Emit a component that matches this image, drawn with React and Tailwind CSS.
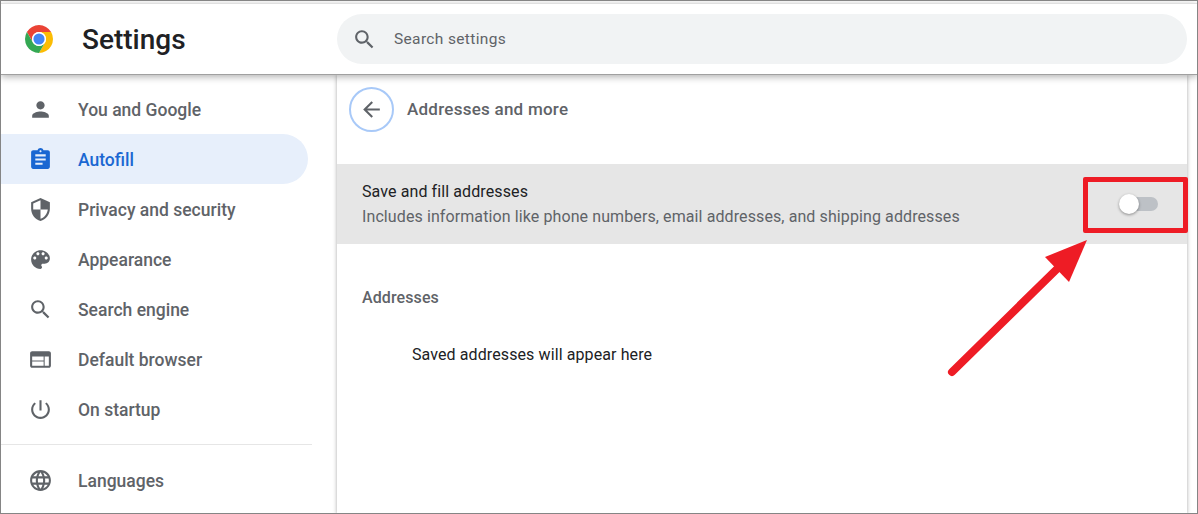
const ICONS = {
  person: 'M12 12c2.21 0 4-1.79 4-4s-1.79-4-4-4-4 1.79-4 4 1.79 4 4 4zm0 2c-2.67 0-8 1.34-8 4v2h16v-2c0-2.66-5.33-4-8-4z',
  assignment: 'M19 3h-4.18C14.4 1.84 13.3 1 12 1c-1.3 0-2.4.84-2.82 2H5c-1.1 0-2 .9-2 2v14c0 1.1.9 2 2 2h14c1.1 0 2-.9 2-2V5c0-1.1-.9-2-2-2zm-7 0c.55 0 1 .45 1 1s-.45 1-1 1-1-.45-1-1 .45-1 1-1zm2 14H7v-2h7v2zm3-4H7v-2h10v2zm0-4H7V7h10v2z',
  security: 'M12 1L3 5v6c0 5.55 3.84 10.74 9 12 5.16-1.26 9-6.45 9-12V5l-9-4zm0 10.99h7c-.53 4.12-3.28 7.79-7 8.94V12H5V6.3l7-3.11v8.8z',
  palette: 'M12 3c-4.97 0-9 4.03-9 9s4.03 9 9 9c.83 0 1.5-.67 1.5-1.5 0-.39-.15-.74-.39-1.01-.23-.26-.38-.61-.38-.99 0-.83.67-1.5 1.5-1.5H16c2.76 0 5-2.24 5-5 0-4.42-4.03-8-9-8zm-5.5 9c-.83 0-1.5-.67-1.5-1.5S5.67 9 6.5 9 8 9.67 8 10.5 7.33 12 6.5 12zm3-4C8.67 8 8 7.33 8 6.5S8.67 5 9.5 5s1.5.67 1.5 1.5S10.33 8 9.5 8zm5 0c-.83 0-1.5-.67-1.5-1.5S13.67 5 14.5 5s1.5.67 1.5 1.5S15.33 8 14.5 8zm3 4c-.83 0-1.5-.67-1.5-1.5S16.67 9 17.5 9s1.5.67 1.5 1.5-.67 1.5-1.5 1.5z',
  search: 'M15.5 14h-.79l-.28-.27C15.41 12.59 16 11.11 16 9.5 16 5.91 13.09 3 9.5 3S3 5.91 3 9.5 5.91 16 9.5 16c1.61 0 3.09-.59 4.23-1.57l.27.28v.79l5 4.99L20.49 19l-4.99-5zm-6 0C7.01 14 5 11.99 5 9.5S7.01 5 9.5 5 14 7.01 14 9.5 11.99 14 9.5 14z',
  web: 'M20 4H4c-1.1 0-1.99.9-1.99 2L2 18c0 1.1.9 2 2 2h16c1.1 0 2-.9 2-2V6c0-1.1-.9-2-2-2zm-5 14H4v-4h11v4zm0-5H4V9h11v4zm5 5h-4V9h4v9z',
  power: 'M13 3h-2v10h2V3zm4.83 2.17l-1.42 1.42C17.99 7.86 19 9.81 19 12c0 3.87-3.13 7-7 7s-7-3.13-7-7c0-2.19 1.01-4.14 2.58-5.42L6.17 5.17C4.23 6.82 3 9.26 3 12c0 4.97 4.03 9 9 9s9-4.03 9-9c0-2.74-1.23-5.18-3.17-6.83z',
  language: 'M11.99 2C6.47 2 2 6.48 2 12s4.47 10 9.99 10C17.52 22 22 17.52 22 12S17.52 2 11.99 2zm6.93 6h-2.95c-.32-1.25-.78-2.45-1.38-3.56 1.84.63 3.37 1.91 4.33 3.56zM12 4.04c.83 1.2 1.48 2.53 1.91 3.96h-3.82c.43-1.43 1.08-2.76 1.91-3.96zM4.26 14C4.1 13.36 4 12.69 4 12s.1-1.36.26-2h3.38c-.08.66-.14 1.32-.14 2 0 .68.06 1.34.14 2H4.26zm.82 2h2.95c.32 1.25.78 2.45 1.38 3.56-1.84-.63-3.37-1.9-4.33-3.56zm2.95-8H5.08c.96-1.66 2.49-2.93 4.33-3.56C8.81 5.55 8.35 6.75 8.03 8zM12 19.96c-.83-1.2-1.48-2.53-1.91-3.96h3.82c-.43 1.43-1.08 2.76-1.91 3.96zM14.34 14H9.66c-.09-.66-.16-1.32-.16-2 0-.68.07-1.35.16-2h4.68c.09.65.16 1.32.16 2 0 .68-.07 1.34-.16 2zm.25 5.56c.6-1.11 1.06-2.31 1.38-3.56h2.95c-.96 1.65-2.49 2.93-4.33 3.56zM16.36 14c.08-.66.14-1.32.14-2 0-.68-.06-1.34-.14-2h3.38c.16.64.26 1.31.26 2s-.1 1.36-.26 2h-3.38z',
  back: 'M20 11H7.83l5.59-5.59L12 4l-8 8 8 8 1.41-1.41L7.83 13H20v-2z',
}

function Icon({ name, className }) {
  return (
    <svg viewBox="0 0 24 24" fill="currentColor" className={className}>
      <path d={ICONS[name]} />
    </svg>
  )
}

function ChromeLogo() {
  return (
    <svg viewBox="0 0 48 48" className="w-[28px] h-[28px] shrink-0">
      <path d="M44.78 12A24 24 0 0 0 3.22 12L13.61 30A12 12 0 0 1 24 12Z" fill="#ea4335" />
      <path d="M24 48A24 24 0 0 0 44.78 12L24 12A12 12 0 0 1 34.39 30Z" fill="#fbbc04" />
      <path d="M3.22 12A24 24 0 0 0 24 48L34.39 30A12 12 0 0 1 13.61 30Z" fill="#34a853" />
      <circle cx="24" cy="24" r="12" fill="#fff" />
      <circle cx="24" cy="24" r="9.5" fill="#4285f4" />
    </svg>
  )
}

function NavItem({ icon, label, active }) {
  return (
    <div
      className={`h-[50px] w-[307px] flex items-center rounded-r-[25px] ${
        active ? 'bg-[#e7effb] text-[#1a67d2]' : 'text-[#5f6368]'
      }`}
    >
      <Icon name={icon} className="w-[25px] h-[25px] ml-[27px] shrink-0" />
      <span className="ml-[25px] pt-[2px] text-[17.5px] font-medium">{label}</span>
    </div>
  )
}

export default function App() {
  return (
    <div className="relative w-[1198px] h-[514px] overflow-hidden bg-white border border-[#858585] font-['Roboto',sans-serif]">
      {/* Top bar */}
      <header className="relative z-10 h-[72px] flex items-center bg-white border-t border-t-[#e0e0e0] mt-[2px] border-b border-b-[#a0a0a0] shadow-[0_2px_7px_rgba(0,0,0,0.3)]">
        <div className="ml-[24px]">
          <ChromeLogo />
        </div>
        <h1 className="ml-[29px] w-[255px] pt-[2px] text-[28px] font-medium text-[#202124]">Settings</h1>
        <div className="w-[850px] h-[50px] rounded-[25px] bg-[#f1f3f4] flex items-center text-[#5f6368]">
          <Icon name="search" className="w-[25px] h-[25px] ml-[15px]" />
          <span className="ml-[17px] pt-[2px] text-[15.5px] tracking-[0.35px]">Search settings</span>
        </div>
      </header>

      <div className="flex h-[439px]">
        {/* Sidebar */}
        <aside className="w-[336px] shrink-0 pt-[9px]">
          <NavItem icon="person" label="You and Google" />
          <NavItem icon="assignment" label="Autofill" active />
          <NavItem icon="security" label="Privacy and security" />
          <NavItem icon="palette" label="Appearance" />
          <NavItem icon="search" label="Search engine" />
          <NavItem icon="web" label="Default browser" />
          <NavItem icon="power" label="On startup" />
          <div className="w-[311px] border-t border-[#e6e6e6] mt-[10px] mb-[10px]" />
          <NavItem icon="language" label="Languages" />
        </aside>

        {/* Addresses card */}
        <main className="w-[850px] shrink-0 bg-white shadow-[0_0_4px_rgba(0,0,0,0.35)]">
          <div className="h-[89px] pt-[12px] pl-[12px] flex items-start">
            <div className="w-[45px] h-[45px] rounded-full border-2 border-[#a8c9f8] flex items-center justify-center text-[#5f6368]">
              <Icon name="back" className="w-[25px] h-[25px]" />
            </div>
            <h2 className="ml-[13px] h-[45px] leading-[45px] text-[17px] font-medium text-[#5f6368] tracking-[0.25px]">Addresses and more</h2>
          </div>
          <div className="h-[80px] bg-[#e6e6e6] flex items-center justify-between pl-[25px] pr-[29px]">
            <div>
              <div className="text-[16px] text-[#202124] leading-[25px] tracking-[0.1px]">Save and fill addresses</div>
              <div className="text-[16px] text-[#5f6368] leading-[25px] tracking-[0.1px]">
                Includes information like phone numbers, email addresses, and shipping addresses
              </div>
            </div>
            <div className="relative w-[34px] h-[14px] rounded-full bg-[#bdc1c6]">
              <div className="absolute left-[-5px] top-[-3px] w-[20px] h-[20px] rounded-full bg-white shadow-[0_1px_3px_rgba(0,0,0,0.4)]" />
            </div>
          </div>
          <div className="pl-[25px] pt-[42px] text-[16px] font-medium text-[#5f6368] leading-[24px] tracking-[0.1px]">Addresses</div>
          <div className="pl-[75px] pt-[33px] text-[16px] text-[#202124] leading-[24px] tracking-[0.1px]">Saved addresses will appear here</div>
        </main>
      </div>

      {/* Annotation over the toggle */}
      <div className="absolute left-[1082px] top-[176px] w-[105px] h-[56px] border-[5px] border-[#ee1c25] rounded-[2px]" />
      <svg className="absolute left-[939px] top-[234px] w-[150px] h-[145px]" viewBox="0 0 150 145">
        <path d="M12 137L118 33" stroke="#ee1c25" strokeWidth="8" strokeLinecap="round" fill="none" />
        <path d="M147 5L105 22L129 47Z" fill="#ee1c25" />
      </svg>
    </div>
  )
}
